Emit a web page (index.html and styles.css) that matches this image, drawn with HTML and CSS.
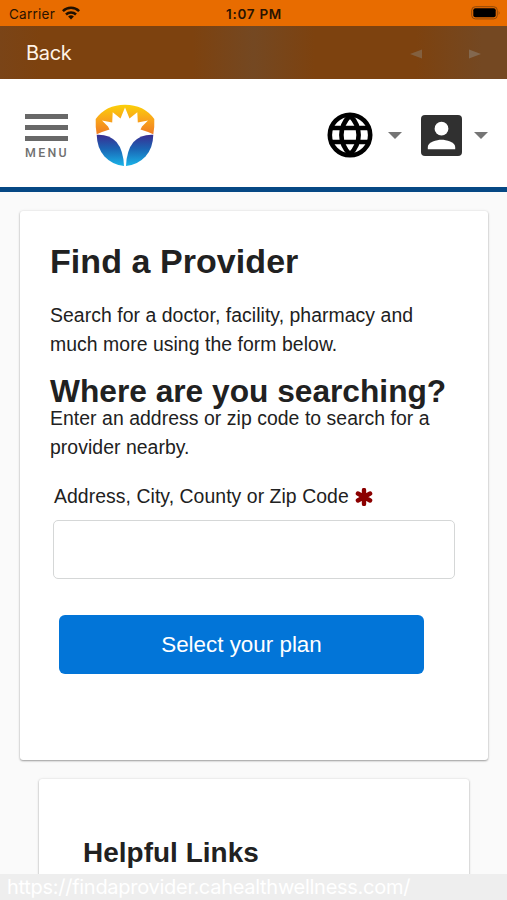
FILE: index.html
```html
<!DOCTYPE html>
<html lang="en">
<head>
<meta charset="utf-8">
<title>Find a Provider</title>
<link rel="stylesheet" href="styles.css">
</head>
<body>
<div class="status">
  <div class="carrier"><span>Carrier</span>
    <svg class="wifi" width="18" height="14" viewBox="0 0 18 14"><g fill="none" stroke="#201000" stroke-width="2.5"><path d="M.9 5.1A11.5 11.5 0 0 1 17.1 5.1"/><path d="M4 8.5A7.1 7.1 0 0 1 14 8.5"/></g><path d="M9 13.5 6.1 10.6A4.1 4.1 0 0 1 11.9 10.6Z" fill="#201000"/></svg>
  </div>
  <div class="time">1:07 PM</div>
  <svg class="battery" width="30" height="14" viewBox="0 0 30 14"><rect x=".7" y=".7" width="25.6" height="12.2" rx="3.6" fill="none" stroke="#8f4909" stroke-width="1"/><rect x="2.3" y="2.3" width="22.4" height="9" rx="2" fill="#000"/><path d="M27.7 4.7q1.8 2.1 0 4.2z" fill="#8f4909"/></svg>
</div>
<div class="toolbar">
  <span class="back">Back</span>
  <div class="arrows">
    <svg width="12" height="10" viewBox="0 0 12 10"><path d="M0 5 12 .5v9z" fill="#83603f"/></svg>
    <svg width="12" height="10" viewBox="0 0 12 10"><path d="M12 5 0 .5v9z" fill="#83684f"/></svg>
  </div>
</div>
<header class="header">
  <div class="menu"><i></i><i></i><i></i><span>MENU</span></div>
  <svg class="logo" width="60" height="63" viewBox="0 0 60 63">
    <defs>
      <linearGradient id="sun" x1="0" y1="0" x2="0" y2="1"><stop offset="0" stop-color="#fbd008"/><stop offset=".5" stop-color="#f9a51b"/><stop offset="1" stop-color="#ef7b24"/></linearGradient>
      <linearGradient id="sea" x1="0" y1="0" x2="0" y2="1"><stop offset="0" stop-color="#3a2d91"/><stop offset=".45" stop-color="#1b64b4"/><stop offset="1" stop-color="#19b4e8"/></linearGradient>
    </defs>
    <path d="M.7 15Q11 .7 30 .7T59.300 15Q59.700 23 58.300 30.200L53 28 45.500 25.500 47 22.500 53 16.500 42.800 18.500 42.300 8.300 34.500 14.500 30 3.500 25.500 14.500 17.700 8.300 17.200 18.500 7 16.500 13 22.500 14.500 25.500 7 28 1.700 30.200Q.3 23 .7 15Z" fill="url(#sun)"/>
    <path d="M1.700 30.700Q14 30 21.500 38 28.300 46 29 62 17.500 61 9.500 52.500 2 44 1.700 30.700Z" fill="url(#sea)"/>
    <path d="M58.300 30.700Q46 30 38.500 38 31.700 46 31 62 42.500 61 50.500 52.500 58 44 58.300 30.700Z" fill="url(#sea)"/>
  </svg>
  <div class="actions">
    <svg class="globe" width="46" height="46" viewBox="0 0 46 46"><g fill="none" stroke="#000" stroke-width="4.600"><circle cx="23" cy="23" r="20.200"/><path d="M23 3.500C11.500 15 11.500 31 23 42.500M23 3.500C34.500 15 34.500 31 23 42.500M5 16h36M5 30h36"/></g></svg>
    <svg class="caret" width="14" height="7" viewBox="0 0 14 7"><path d="M0 0h14L7 7z" fill="#757575"/></svg>
    <svg class="person" width="41" height="41" viewBox="0 0 41 41"><rect width="41" height="41" rx="4" fill="#303030"/><circle cx="20.500" cy="13.700" r="6.900" fill="#fff"/><path d="M6.800 34.200v-2.300c0-4.600 9.100-7.100 13.700-7.100s13.700 2.500 13.700 7.100v2.300z" fill="#fff"/></svg>
    <svg class="caret" width="14" height="7" viewBox="0 0 14 7"><path d="M0 0h14L7 7z" fill="#757575"/></svg>
  </div>
</header>
<main class="page">
  <section class="card">
    <h1>Find a Provider</h1>
    <p class="intro">Search for a doctor, facility, pharmacy and<br>much more using the form below.</p>
    <h2>Where are you searching?</h2>
    <p>Enter an address or zip code to search for a<br>provider nearby.</p>
    <label for="address">Address, City, County or Zip Code
      <svg class="required" width="18" height="18" viewBox="0 0 18 18"><path d="M9 2v14M2.900 5.500l12.200 7M15.100 5.500l-12.200 7" stroke="#8b0000" stroke-width="4.400" stroke-linecap="round"/></svg>
    </label>
    <input id="address" type="text">
    <button type="button">Select your plan</button>
  </section>
  <section class="card links">
    <h3>Helpful Links</h3>
  </section>
</main>
<div class="url">https://findaprovider.cahealthwellness.com/</div>
</body>
</html>
```

FILE: styles.css
```css
* { box-sizing: border-box; }
body {
  margin: 0;
  height: 900px;
  overflow: hidden;
  display: flex;
  flex-direction: column;
  background: #fafafa;
  color: #212121;
  font-family: "Liberation Sans", Arial, sans-serif;
}
svg { display: block; flex: none; }
h1, h2, h3, p { margin: 0; white-space: nowrap; }

.status {
  flex: none;
  height: 26px;
  display: grid;
  grid-template-columns: 1fr auto 1fr;
  align-items: center;
  padding: 1px 6px 0 9px;
  background: #e86c00;
  color: #2a1300;
  font-family: Inter, sans-serif;
  font-size: 13.5px;
}
.carrier { display: flex; align-items: center; gap: 7px; letter-spacing: .25px; }
.wifi { margin-top: -2px; }
.time { font-weight: 600; letter-spacing: .7px; margin-right: 2px; }
.battery { justify-self: end; margin-top: -1px; }

.toolbar {
  flex: none;
  height: 53px;
  display: flex;
  align-items: center;
  justify-content: space-between;
  padding: 0 26px;
  background: linear-gradient(90deg, #7a4417 0, #7d420f 8%, #7d420f 38%, #744822 50%, #7d420f 62%, #7d420f 82%, #744822 95%);
}
.back { color: #fff3e6; font: 20px/24px Inter, sans-serif; letter-spacing: -.3px; }
.arrows { display: flex; gap: 47px; padding-top: 2px; }

.header {
  flex: none;
  height: 113px;
  display: flex;
  align-items: flex-start;
  padding: 25px 19px 0 25px;
  background: #fff;
  border-bottom: 5px solid #064884;
}
.menu { width: 43px; padding-top: 10px; display: flex; flex-direction: column; gap: 6px; }
.menu i { height: 5px; background: #686868; }
.menu span { color: #707070; font: 500 12.4px/12px Roboto, sans-serif; letter-spacing: 2.3px; }
.logo { margin-left: 27px; }
.actions { margin-left: auto; display: flex; align-items: center; padding-top: 8px; }
.globe + .caret { margin: 0 19px 0 15px; }
.person + .caret { margin-left: 12px; }

.page { flex: 1; min-height: 0; padding: 19px 19px 0 20px; }
.card {
  height: 549px;
  padding: 30px 30px 0;
  background: #fff;
  border-radius: 3px;
  box-shadow: 0 1px 2px rgba(0, 0, 0, .35), 0 0 3px rgba(0, 0, 0, .1);
}
h1 { font-size: 34px; line-height: 40px; letter-spacing: .06px; }
.card p { font-size: 19.4px; line-height: 29.3px; letter-spacing: .055px; }
.card .intro { margin-top: 20px; }
h2 { font-size: 31.7px; line-height: 32px; margin-top: 15px; }
h2 + p { margin-top: -3px; }
label { display: flex; align-items: center; gap: 6px; height: 29px; margin: 20px 0 0 4px; font-size: 19.4px; letter-spacing: .06px; }
input {
  display: block;
  width: 402px;
  height: 59px;
  margin: 9px 0 0 3px;
  border: 1.5px solid #d5d7d7;
  border-radius: 5px;
  background: #fff;
}
button {
  display: block;
  width: 365px;
  height: 59px;
  margin: 36px 0 0 9px;
  padding: 0;
  border: 0;
  border-radius: 6px;
  background: #0275d8;
  color: #fff;
  font: 22.4px "Liberation Sans", Arial, sans-serif;
}
.links { height: 160px; margin: 19px 19px 0; padding: 57px 44px 0; }
h3 { font-size: 27.9px; line-height: 34px; letter-spacing: .05px; }

.url {
  flex: none;
  position: relative;
  height: 26px;
  padding-left: 7px;
  background: #eee;
  color: #fff;
  font: 20px/27px Inter, sans-serif;
  letter-spacing: -.28px;
  white-space: nowrap;
}
```
